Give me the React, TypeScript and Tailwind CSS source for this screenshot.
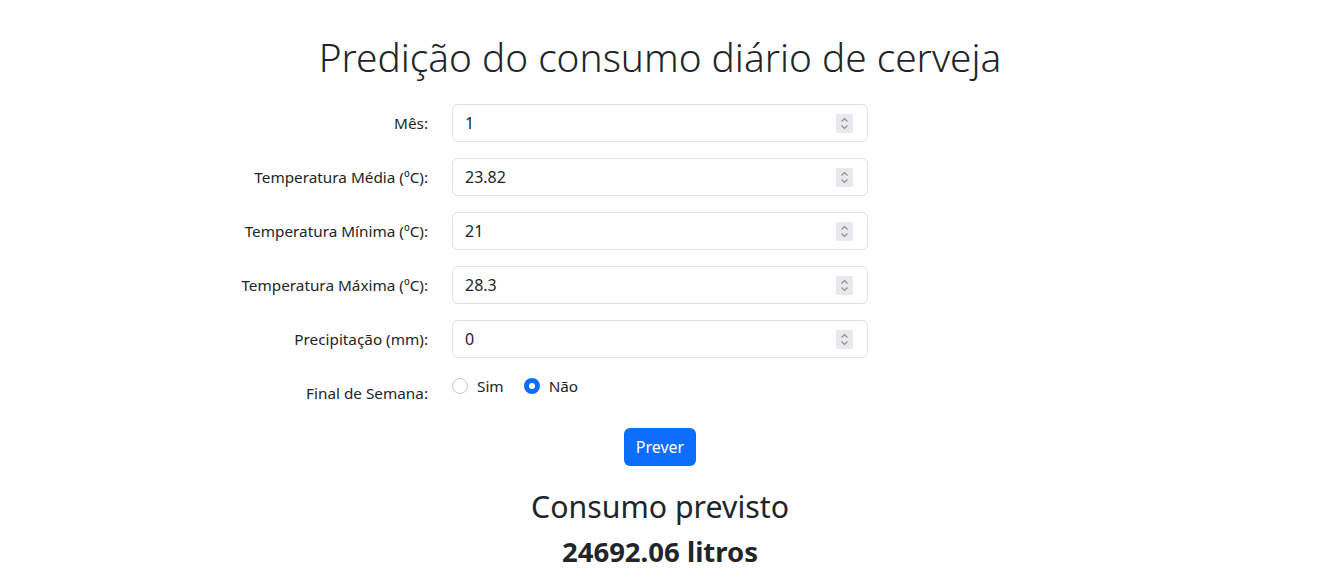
import React from "react";

const fields = [
  { label: "Mês:", value: "1" },
  { label: "Temperatura Média (ºC):", value: "23.82" },
  { label: "Temperatura Mínima (ºC):", value: "21" },
  { label: "Temperatura Máxima (ºC):", value: "28.3" },
  { label: "Precipitação (mm):", value: "0" },
];

const Spinner = () => (
  <div className="flex h-[19px] w-[17px] items-center justify-center rounded-[2px] bg-[#e9e9ed]">
    <svg width="9" height="13" viewBox="0 0 9 13" fill="none" stroke="#8a8a8f" strokeWidth="1.1">
      <path d="M1.5 4.5 L4.5 1.5 L7.5 4.5" />
      <path d="M1.5 8.5 L4.5 11.5 L7.5 8.5" />
    </svg>
  </div>
);

const Radio = ({ checked, label }: { checked: boolean; label: string }) => (
  <label className="flex items-center gap-[9px]">
    {checked ? (
      <span className="flex h-4 w-4 items-center justify-center rounded-full bg-[#0d6efd]">
        <span className="h-[6px] w-[6px] rounded-full bg-white" />
      </span>
    ) : (
      <span className="h-4 w-4 rounded-full border border-[#c4c8cc] bg-white" />
    )}
    <span>{label}</span>
  </label>
);

export default function App() {
  return (
    <div className="min-h-screen bg-white text-[15.3px] leading-6 text-[#212529]" style={{ fontFamily: '"Noto Sans", sans-serif' }}>
      <div className="mx-auto w-[1320px] pt-[33px]">
        <h1 className="mb-[23px] text-center text-[38.8px] font-light leading-[48px]">Predição do consumo diário de cerveja</h1>

        <div className="flex flex-col">
          {fields.map((f) => (
            <div key={f.label} className="mb-4 flex">
              <div className="flex w-[440px] items-center justify-end px-3">{f.label}</div>
              <div className="w-[440px] px-3">
                <div className="flex h-[38px] items-center justify-between rounded-md border border-[#dee2e6] pl-3 pr-[14px] text-[16px]">
                  <span>{f.value}</span>
                  <Spinner />
                </div>
              </div>
            </div>
          ))}

          <div className="mb-4 flex">
            <div className="h-[38px] w-[440px] px-3 pt-[7px] text-right">Final de Semana:</div>
            <div className="flex w-[440px] items-start gap-5 px-3">
              <Radio checked={false} label="Sim" />
              <Radio checked label="Não" />
            </div>
          </div>
        </div>

        <div className="flex justify-center">
          <button className="h-[38px] w-[72px] rounded-md bg-[#0d6efd] text-[16px] text-white">Prever</button>
        </div>

        <div className="mt-6 text-center">
          <h3 className="text-[30.3px] leading-[34px]">Consumo previsto</h3>
          <p className="mt-[12px] text-[27.5px] font-bold leading-[32px]">24692.06 litros</p>
        </div>
      </div>
    </div>
  );
}
